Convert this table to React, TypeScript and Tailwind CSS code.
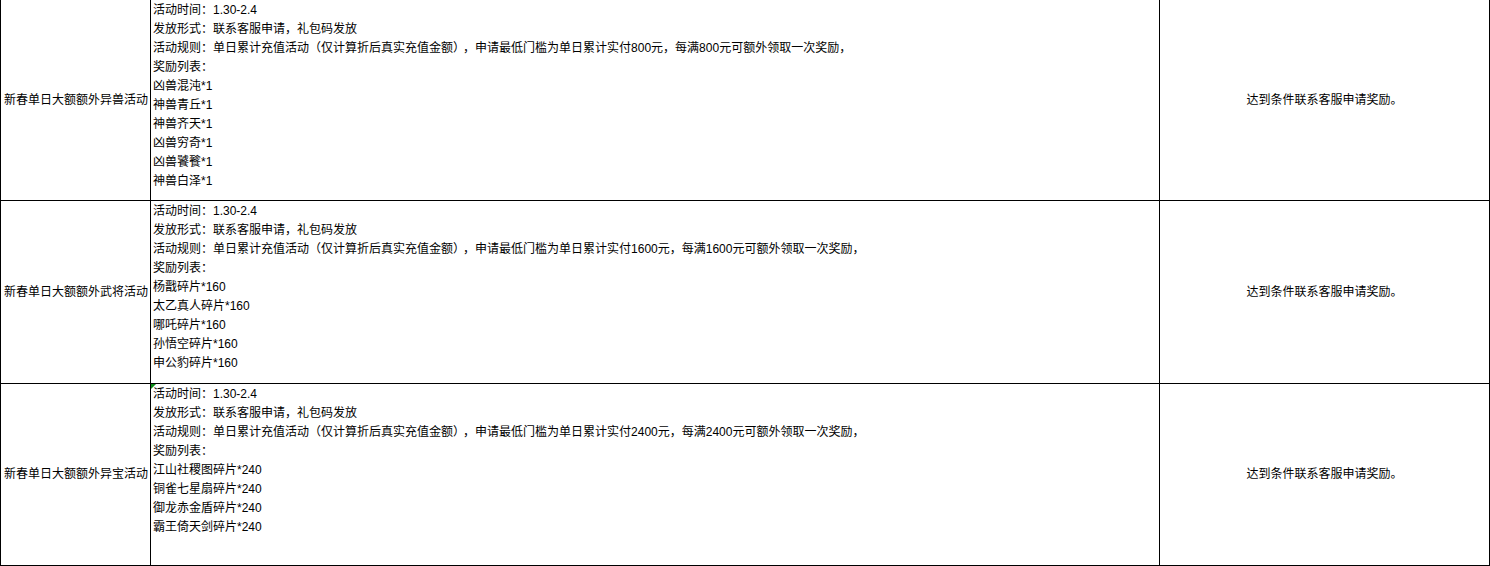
const rows = [
  {
    name: "新春单日大额额外异兽活动",
    threshold: "800",
    items: ["凶兽混沌*1", "神兽青丘*1", "神兽齐天*1", "凶兽穷奇*1", "凶兽饕餮*1", "神兽白泽*1"],
    height: "h-[201px]",
    marker: false,
  },
  {
    name: "新春单日大额额外武将活动",
    threshold: "1600",
    items: ["杨戬碎片*160", "太乙真人碎片*160", "哪吒碎片*160", "孙悟空碎片*160", "申公豹碎片*160"],
    height: "h-[183px]",
    marker: false,
  },
  {
    name: "新春单日大额额外异宝活动",
    threshold: "2400",
    items: ["江山社稷图碎片*240", "铜雀七星扇碎片*240", "御龙赤金盾碎片*240", "霸王倚天剑碎片*240"],
    height: "h-[182px]",
    marker: true,
  },
];

export default function App() {
  return (
    <div
      className="w-[1490px] h-[566px] overflow-hidden bg-white text-[12px] leading-[19px] text-black"
      style={{ fontFamily: '"Liberation Sans", "Noto Sans CJK SC", sans-serif' }}
    >
      <div className="w-[1490px] border-l border-black">
        {rows.map((row, i) => (
          <div key={i} className={`flex border-b border-black ${row.height}`}>
            <div className="w-[150px] shrink-0 border-r border-black flex items-center pl-[3px] whitespace-nowrap">
              {row.name}
            </div>
            <div className="relative w-[1009px] shrink-0 border-r border-black pl-[2px] pt-px whitespace-nowrap">
              {row.marker && (
                <svg className="absolute left-0 top-0" width="5" height="5" viewBox="0 0 5 5">
                  <polygon points="0,0 5,0 0,5" fill="#0a8a16" />
                </svg>
              )}
              <div>活动时间：1.30-2.4</div>
              <div>发放形式：联系客服申请，礼包码发放</div>
              <div>
                活动规则：单日累计充值活动（仅计算折后真实充值金额）<span className="ml-[4px]">，</span>申请最低门槛为单日累计实付{row.threshold}元，每满{row.threshold}元可额外领取一次奖励，
              </div>
              <div>奖励列表：</div>
              {row.items.map((item) => (
                <div key={item}>{item}</div>
              ))}
            </div>
            <div className="flex-1 border-r border-black flex items-center justify-center">
              达到条件联系客服申请奖励。
            </div>
          </div>
        ))}
      </div>
    </div>
  );
}
